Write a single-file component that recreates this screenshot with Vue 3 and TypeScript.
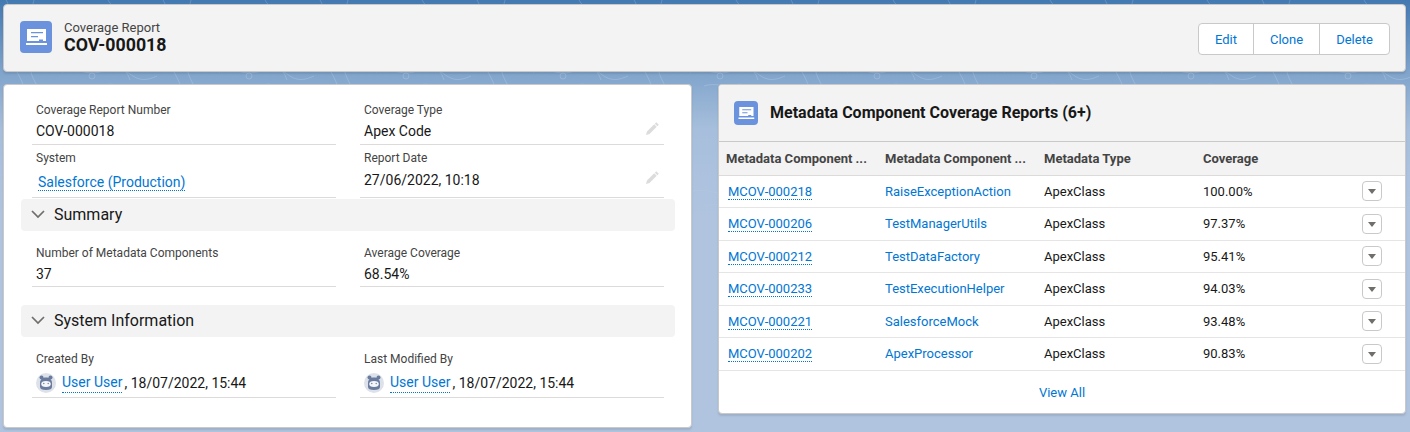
<script setup lang="ts">
interface Row {
  id: string
  name: string
  type: string
  coverage: string
}

const rows: Row[] = [
  { id: 'MCOV-000218', name: 'RaiseExceptionAction', type: 'ApexClass', coverage: '100.00%' },
  { id: 'MCOV-000206', name: 'TestManagerUtils', type: 'ApexClass', coverage: '97.37%' },
  { id: 'MCOV-000212', name: 'TestDataFactory', type: 'ApexClass', coverage: '95.41%' },
  { id: 'MCOV-000233', name: 'TestExecutionHelper', type: 'ApexClass', coverage: '94.03%' },
  { id: 'MCOV-000221', name: 'SalesforceMock', type: 'ApexClass', coverage: '93.48%' },
  { id: 'MCOV-000202', name: 'ApexProcessor', type: 'ApexClass', coverage: '90.83%' }
]

const audit = [
  { label: 'Created By', date: '18/07/2022, 15:44' },
  { label: 'Last Modified By', date: '18/07/2022, 15:44' }
]
</script>

<template>
  <div class="page">
    <!-- contour lines of the page backdrop -->
    <svg class="contours" width="1410" height="432">
      <defs>
        <pattern id="topo" width="157" height="120" patternUnits="userSpaceOnUse">
          <g fill="none" stroke="#fff" stroke-opacity=".16">
            <path d="M6 0c8 12-4 22 6 34s-2 24 4 36 14 22 8 50" />
            <path d="M34 0c-6 14 10 24 4 40s-12 24-4 40 16 20 12 40" />
            <path d="M62 72c14-6 24 4 38 0s20-6 30 2 18 6 27 2" />
            <path d="M76 86c12-4 20 2 30-1s18 4 26 4" />
            <path d="M108 0c4 8 14 10 12 22s-14 16-10 30 16 14 20 28" />
            <circle cx="92" cy="76" r="3" />
          </g>
        </pattern>
      </defs>
      <rect width="1410" height="432" fill="url(#topo)" />
    </svg>

    <header class="panel head">
      <span class="icon icon-lg">
        <svg width="24" height="24" viewBox="0 0 24 24" fill="#fff">
          <path fill-rule="evenodd" d="M3 4h19v12H3zM7 7v1.300h12V7zM7 11v1.300h7V11zM15 14.500V16h4v-1.500z" />
          <path d="M2 18h21v2H2z" />
        </svg>
      </span>
      <div class="head-text">
        <div class="head-kind">Coverage Report</div>
        <div class="head-name">COV-000018</div>
      </div>
      <div class="btn-group">
        <button class="edit">Edit</button>
        <button class="clone">Clone</button>
        <button class="del">Delete</button>
      </div>
    </header>

    <div class="columns">
      <section class="panel details">
        <div class="fields">
          <div class="field">
            <div class="label">Coverage Report Number</div>
            <div class="value">COV-000018</div>
          </div>
          <div class="field">
            <div class="label">Coverage Type</div>
            <div class="value">Apex Code<svg class="pencil" viewBox="0 0 16 16"><path d="M12 1.300l2.700 2.700-1.500 1.500-2.700-2.700zM9.800 3.500l2.700 2.700-7.700 7.700L1 15l1.100-3.800z" /></svg></div>
          </div>
          <div class="field tall">
            <div class="label">System</div>
            <div class="value sys-value"><a class="link dotted sys">Salesforce (Production)</a></div>
          </div>
          <div class="field tall">
            <div class="label">Report Date</div>
            <div class="value date-value">27/06/2022, 10:18<svg class="pencil" viewBox="0 0 16 16"><path d="M12 1.300l2.700 2.700-1.500 1.500-2.700-2.700zM9.800 3.500l2.700 2.700-7.700 7.700L1 15l1.100-3.800z" /></svg></div>
          </div>
        </div>

        <div class="section-bar">
          <svg width="16" height="16" viewBox="0 0 16 16" fill="none" stroke="#706e6b" stroke-width="1.700"><path d="M2 5l6 6 6-6" /></svg>
          <span>Summary</span>
        </div>
        <div class="fields section-body">
          <div class="field">
            <div class="label">Number of Metadata Components</div>
            <div class="value">37</div>
          </div>
          <div class="field">
            <div class="label">Average Coverage</div>
            <div class="value">68.54%</div>
          </div>
        </div>

        <div class="section-bar second">
          <svg width="16" height="16" viewBox="0 0 16 16" fill="none" stroke="#706e6b" stroke-width="1.700"><path d="M2 5l6 6 6-6" /></svg>
          <span>System Information</span>
        </div>
        <div class="fields section-body audit">
          <div v-for="item in audit" :key="item.label" class="field">
            <div class="label">{{ item.label }}</div>
            <div class="value user">
              <svg class="avatar" width="20" height="20" viewBox="0 0 20 20">
                <circle cx="10" cy="10" r="10" fill="#dde2ea" />
                <circle cx="5.500" cy="4.500" r="2" fill="#6a7b9e" />
                <circle cx="14.500" cy="4.500" r="2" fill="#6a7b9e" />
                <path d="M4 10c0-3.500 2.500-5.500 6-5.500s6 2 6 5.500v4c0 2-2 3-6 3s-6-1-6-3z" fill="#6a7b9e" />
                <ellipse cx="10" cy="11" rx="4.800" ry="3" fill="#f4f6fa" />
                <circle cx="7.800" cy="10.500" r=".7" fill="#6a7b9e" />
                <circle cx="12.200" cy="10.500" r=".7" fill="#6a7b9e" />
              </svg>
              <a class="link dotted">User User</a><span class="date">, {{ item.date }}</span>
            </div>
          </div>
        </div>
      </section>

      <section class="panel related">
        <div class="related-head">
          <span class="icon icon-sm">
            <svg width="18" height="18" viewBox="0 0 24 24" fill="#fff">
              <path fill-rule="evenodd" d="M3 4h19v12H3zM7 7v1.300h12V7zM7 11v1.300h7V11zM15 14.500V16h4v-1.500z" />
              <path d="M2 18h21v2H2z" />
            </svg>
          </span>
          <h2>Metadata Component Coverage Reports (6+)</h2>
        </div>
        <table>
          <colgroup>
            <col class="c" />
            <col class="c" />
            <col class="c" />
            <col class="c" />
            <col />
          </colgroup>
          <thead>
            <tr>
              <th>Metadata Component ...</th>
              <th>Metadata Component ...</th>
              <th>Metadata Type</th>
              <th>Coverage</th>
              <th></th>
            </tr>
          </thead>
          <tbody>
            <tr v-for="row in rows" :key="row.id">
              <td class="first"><a class="link dotted">{{ row.id }}</a></td>
              <td><a class="link">{{ row.name }}</a></td>
              <td>{{ row.type }}</td>
              <td>{{ row.coverage }}</td>
              <td class="action">
                <span class="menu"><i></i></span>
              </td>
            </tr>
          </tbody>
        </table>
        <div class="view-all"><a class="link">View All</a></div>
      </section>
    </div>
  </div>
</template>

<style>
body {
  margin: 0;
}
</style>

<style scoped>
.page {
  position: relative;
  box-sizing: border-box;
  width: 1410px;
  height: 432px;
  padding: 4px 4px 0 3px;
  overflow: hidden;
  background: linear-gradient(180deg, #4379b1 0, #7fa3cb 70px, #a7bfdc 130px, #b0c4df 220px);
  font-family: Roboto, "Liberation Sans", sans-serif;
  color: #181818;
}

.contours {
  position: absolute;
  top: 0;
  left: 0;
  -webkit-mask-image: linear-gradient(180deg, #000 100px, transparent 240px);
  mask-image: linear-gradient(180deg, #000 100px, transparent 240px);
}

.panel {
  position: relative;
  box-sizing: border-box;
  border: 1px solid #c9c9c9;
  border-radius: 4px;
  box-shadow: 0 2px 2px rgba(0, 0, 0, 0.1);
}

.head {
  display: flex;
  align-items: center;
  height: 68px;
  padding: 0 15px 2px 16px;
  background: #f3f3f3;
}

.icon {
  display: flex;
  flex: none;
  align-items: center;
  justify-content: center;
  background: #6b92dc;
  border-radius: 4px;
}

.icon-lg {
  width: 32px;
  height: 32px;
}

.icon-sm {
  width: 24px;
  height: 24px;
}

.head-text {
  margin-left: 12px;
}

.head-kind {
  font-size: 13px;
  line-height: 15px;
  color: #444;
}

.head-name {
  font-size: 17.8px;
  font-weight: 700;
  line-height: 19px;
}

.btn-group {
  display: flex;
  height: 32px;
  margin-top: 4px;
  margin-left: auto;
  box-sizing: border-box;
  overflow: hidden;
  background: #fff;
  border: 1px solid #c9c9c9;
  border-radius: 4px;
}

.btn-group button {
  padding: 0;
  font: 13px Roboto, "Liberation Sans", sans-serif;
  color: #0176d3;
  background: none;
  border: 0;
  border-left: 1px solid #c9c9c9;
}

.btn-group .edit {
  width: 54px;
  border-left: 0;
}

.btn-group .clone {
  width: 66px;
}

.btn-group .del {
  width: 70px;
}

.columns {
  display: flex;
  align-items: flex-start;
  gap: 26px;
  margin-top: 12px;
}

.details {
  width: 689px;
  height: 344px;
  padding: 16px 16px 0 17px;
  background: #fff;
}

.fields {
  display: grid;
  grid-template-columns: 304px 304px;
  column-gap: 24px;
  margin-left: 11px;
}

.field {
  position: relative;
  box-sizing: border-box;
  height: 44px;
  padding: 0 4px;
  border-bottom: 1px solid #dddbda;
}

.field.tall {
  height: 53px;
  padding-top: 4px;
}

.label {
  font-size: 12px;
  line-height: 18px;
  color: #444;
}

.value {
  margin-top: 2px;
  font-size: 14px;
  line-height: 20px;
}

.date-value {
  margin-top: 3px;
}

.sys-value {
  margin-top: 5px;
}

.sys {
  margin-left: 2px;
}

.pencil {
  position: absolute;
  right: 4px;
  bottom: 8px;
  width: 15px;
  height: 15px;
  fill: #dcdcdc;
}

.tall .pencil {
  bottom: 12px;
}

.section-bar {
  display: flex;
  align-items: center;
  box-sizing: border-box;
  width: 654px;
  height: 32px;
  margin-top: 1px;
  padding: 0 0 2px 9px;
  background: #f3f3f3;
  border-radius: 4px;
  font-size: 16px;
}

.section-bar span {
  margin-left: 8px;
}

.section-bar.second {
  margin-top: 18px;
}

.section-body {
  margin-top: 13px;
}

.section-body .field {
  height: 43px;
}

.audit {
  margin-top: 13px;
}

.section-body.audit .field {
  height: 48px;
}

.user {
  display: flex;
  align-items: center;
  margin-top: 4px;
}

.avatar {
  flex: none;
  margin-right: 6px;
}

.date {
  margin-left: 2px;
  color: #181818;
}

.link {
  color: #0176d3;
  text-decoration: none;
}

.dotted {
  border-bottom: 1px dotted #0176d3;
}

.related {
  width: 688px;
  height: 330px;
  overflow: hidden;
  background: #fff;
}

.related-head {
  display: flex;
  align-items: center;
  box-sizing: border-box;
  height: 57px;
  padding-left: 15px;
  background: #f3f3f3;
  border-bottom: 1px solid #c9c9c9;
}

.related-head h2 {
  margin: 0 0 0 12px;
  font-size: 16px;
  font-weight: 700;
  line-height: 20px;
}

table {
  width: 100%;
  table-layout: fixed;
  border-collapse: collapse;
  font-size: 13px;
}

col.c {
  width: 159px;
}

th {
  height: 32.5px;
  padding: 0 0 0 7px;
  font-size: 13px;
  font-weight: 700;
  color: #444;
  text-align: left;
  white-space: nowrap;
  background: #f3f3f3;
  border-bottom: 1px solid #dddbda;
}

td {
  box-sizing: border-box;
  height: 32.5px;
  padding: 0 0 0 7px;
  border-bottom: 1px solid #e5e5e5;
}

td.first {
  padding-left: 9px;
}

.action {
  padding: 0 23px 0 0;
  text-align: right;
}

.menu {
  display: inline-flex;
  align-items: center;
  justify-content: center;
  box-sizing: border-box;
  width: 20px;
  height: 20px;
  vertical-align: middle;
  background: #fff;
  border: 1px solid #c9c9c9;
  border-radius: 4px;
}

.menu i {
  width: 0;
  height: 0;
  margin-top: 1px;
  border-top: 5px solid #706e6b;
  border-right: 4px solid transparent;
  border-left: 4px solid transparent;
}

.view-all {
  display: flex;
  align-items: center;
  justify-content: center;
  height: 44px;
  font-size: 13px;
}
</style>
